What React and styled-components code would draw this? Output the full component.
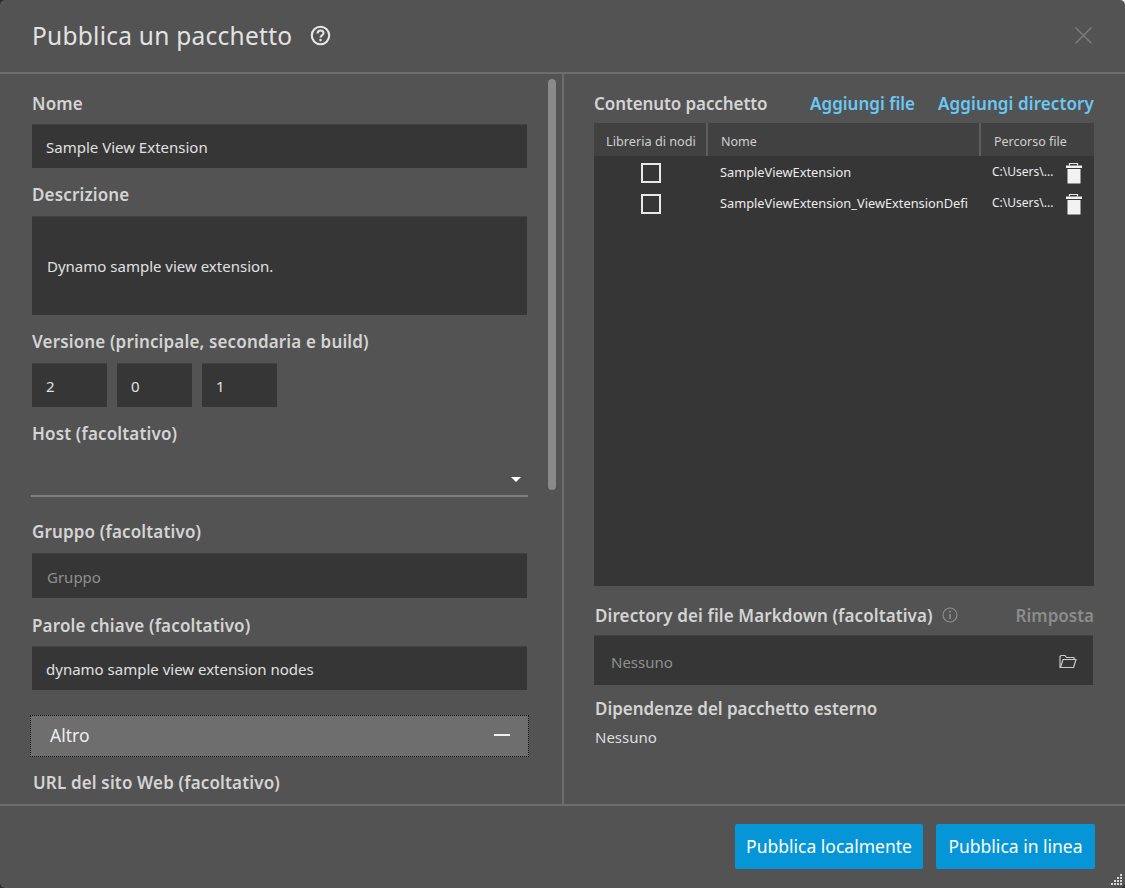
import React from "react";
import styled, { createGlobalStyle } from "styled-components";

const Global = createGlobalStyle`
  html, body {
    margin: 0;
    padding: 0;
    background: linear-gradient(to right, transparent 90%, #e8e8e8 90%) top / 100% 10px no-repeat, #2b2b2b;
  }
  * { box-sizing: border-box; }
  #root { width: 1125px; height: 888px; }
`;

const Dialog = styled.div`
  position: relative;
  width: 1125px;
  height: 888px;
  background: #535353;
  border-radius: 5px;
  overflow: hidden;
  display: flex;
  flex-direction: column;
  font-family: "Noto Sans", sans-serif;
  color: #dcdcdc;
`;
const Header = styled.header`
  height: 74px;
  flex: none;
  border-bottom: 2px solid #6d6d6d;
  display: flex;
  align-items: center;
  padding: 0 32px 2px;
`;
const Title = styled.h1`
  margin: 0;
  font-size: 24.5px;
  font-weight: 400;
  color: #e2e2e2;
  letter-spacing: 0.25px;
`;
const HelpIcon = styled.svg`
  margin-left: 18px;
  width: 21px;
  height: 21px;
`;
const CloseIcon = styled.svg`
  margin-left: auto;
  width: 19px;
  height: 19px;
`;
const Body = styled.div`
  flex: 1;
  min-height: 0;
  display: flex;
`;
const LeftPane = styled.section`
  position: relative;
  width: 564px;
  flex: none;
  border-right: 2px solid #6d6d6d;
  padding: 19px 0 0 32px;
  overflow: hidden;
`;
const Scrollbar = styled.div`
  position: absolute;
  left: 548px;
  top: 5px;
  width: 8px;
  height: 411px;
  border-radius: 4px;
  background: #8a8a8a;
`;
const Label = styled.div`
  font-size: 17px;
  letter-spacing: ${(p) => p.$ls ?? 0.15}px;
  line-height: 22px;
  font-weight: 600;
  color: #d4d4d4;
  margin: ${(p) => p.$mt || 0}px 0 ${(p) => p.$mb ?? 10}px ${(p) => p.$ml || 0}px;
  white-space: nowrap;
`;
const Field = styled.div`
  width: ${(p) => p.$w || 495}px;
  height: ${(p) => p.$h || 44}px;
  background: #363636;
  border-top: 1px solid #414141;
  display: flex;
  align-items: center;
  padding-left: ${(p) => p.$pl || 14}px;
  padding-top: ${(p) => (p.$muted ? 2 : 0)}px;
  font-size: 15px;
  color: ${(p) => (p.$muted ? "#8f8f8f" : "#e0e0e0")};
`;
const VersionRow = styled.div`
  display: flex;
  gap: 10px;
`;
const Select = styled.div`
  position: relative;
  width: 497px;
  height: 44px;
  margin: -2px 0 0 -1px;
  border-bottom: 2px solid #7f7f7f;
`;
const Caret = styled.span`
  position: absolute;
  right: 7px;
  top: 24px;
  width: 0;
  height: 0;
  border-left: 5px solid transparent;
  border-right: 5px solid transparent;
  border-top: 5px solid #fff;
`;
const Expander = styled.div`
  width: 499px;
  height: 42px;
  margin: 25px 0 0 -2px;
  background: #6e6e6e;
  border: 1px dotted #111;
  display: flex;
  align-items: center;
  justify-content: space-between;
  padding: 0 18px 2px 19px;
  font-size: 17.5px;
  color: #ececec;
`;
const Minus = styled.span`
  width: 16px;
  height: 2px;
  background: #f0f0f0;
`;
const RightPane = styled.section`
  flex: 1;
  padding: 19px 31px 0 30px;
  min-width: 0;
`;
const ContentHead = styled.div`
  display: flex;
  align-items: baseline;
  height: 22px;
`;
const Link = styled.span`
  font-size: 17px;
  letter-spacing: ${(p) => p.$ls}px;
  font-weight: 600;
  line-height: 22px;
  color: #6ac8f5;
  white-space: nowrap;
  margin-left: ${(p) => (p.$first ? "auto" : "23px")};
`;
const Table = styled.div`
  margin-top: 8px;
  width: 500px;
  height: 463px;
  background: #363636;
  font-size: 12.8px;
`;
const THead = styled.div`
  display: grid;
  grid-template-columns: 114px 273px 113px;
  height: 33px;
  background: #414141;
`;
const TH = styled.div`
  display: flex;
  align-items: center;
  justify-content: ${(p) => (p.$center ? "center" : "flex-start")};
  padding-left: ${(p) => (p.$center ? 2 : 13)}px;
  padding-top: 3px;
  font-size: ${(p) => (p.$center ? 12.7 : 12.5)}px;
  color: #cfcfcf;
  border-right: ${(p) => (p.$last ? "none" : "2px solid #5e5e5e")};
  white-space: nowrap;
`;
const TRow = styled.div`
  display: grid;
  grid-template-columns: 114px 273px 113px;
  height: 31px;
  align-items: center;
`;
const Check = styled.span`
  display: block;
  justify-self: center;
  width: 20px;
  height: 20px;
  border: 2px solid #e8e8e8;
  margin-top: 2px;
`;
const FileName = styled.div`
  padding-left: 12px;
  width: 260px;
  overflow: hidden;
  white-space: nowrap;
  color: #ececec;
`;
const PathCell = styled.div`
  display: flex;
  align-items: center;
  padding-left: 11px;
  font-size: 12px;
  color: #ececec;
  white-space: nowrap;
`;
const Trash = styled.svg`
  margin: 2px 0 0 13px;
  width: 16px;
  height: 22px;
  flex: none;
`;
const MdHead = styled.div`
  display: flex;
  align-items: center;
  height: 22px;
  margin: 19px 0 0 1px;
  width: 499px;
`;
const InfoIcon = styled.svg`
  margin: 0 0 2px 9px;
  width: 16px;
  height: 16px;
`;
const Reset = styled.span`
  margin: 0 0 2px auto;
  font-size: 17px;
  font-weight: 600;
  color: #8c8c8c;
`;
const PathField = styled.div`
  width: 499px;
  height: 50px;
  margin-top: 8px;
  background: #363636;
  border-top: 1px solid #414141;
  display: flex;
  align-items: center;
  justify-content: space-between;
  padding: 2px 16px 0 17px;
  font-size: 15px;
  color: #8f8f8f;
`;
const Plain = styled.div`
  font-size: 15px;
  color: #dedede;
  line-height: 20px;
  margin-left: 1px;
`;
const Footer = styled.footer`
  flex: none;
  height: 84px;
  border-top: 2px solid #6d6d6d;
  display: flex;
  justify-content: flex-end;
  gap: 13px;
  padding: 18px 30px 0 0;
`;
const Button = styled.button`
  height: 45px;
  width: ${(p) => p.$w}px;
  border: none;
  border-radius: 2px;
  background: #0696d7;
  color: #fff;
  font-family: inherit;
  font-size: 17.5px;
  padding: 0 0 2px;
  white-space: nowrap;
`;
const Grip = styled.svg`
  position: absolute;
  right: 3px;
  bottom: 2px;
  width: 14px;
  height: 14px;
`;

const gripDots = [[12,2],[9,5],[12,5],[6,8],[9,8],[12,8],[3,11],[6,11],[9,11],[12,11]];

function TrashIcon() {
  return (
    <Trash viewBox="0 0 16 22">
      <path d="M3.500 3.500V1.500h8v2" fill="none" stroke="#e4e4e4" strokeWidth="1.200" />
      <path d="M0 3.500h16V6H0z" fill="#f2f2f2" />
      <path d="M1.500 7h13v14.500h-13z" fill="#f2f2f2" />
    </Trash>
  );
}

export default function App() {
  return (
    <>
      <Global />
      <Dialog>
        <Header>
          <Title>Pubblica un pacchetto</Title>
          <HelpIcon viewBox="0 0 20 20" fill="none">
            <circle cx="10" cy="10" r="8.300" stroke="#e6e6e6" strokeWidth="2" />
            <path d="M7.200 8c0-1.700 1.300-2.700 2.900-2.700s2.800 1 2.800 2.400c0 2.200-2.900 2.100-2.900 4.200" stroke="#e6e6e6" strokeWidth="1.900" />
            <circle cx="10" cy="14.400" r="1.200" fill="#e6e6e6" />
          </HelpIcon>
          <CloseIcon viewBox="0 0 19 19" fill="none">
            <path d="M1.500 1.500l16 16M17.500 1.500l-16 16" stroke="#7a7a7a" strokeWidth="1.600" />
          </CloseIcon>
        </Header>
        <Body>
          <LeftPane>
            <Scrollbar />
            <Label $mb={9}>Nome</Label>
            <Field>Sample View Extension</Field>
            <Label $mt={16}>Descrizione</Label>
            <Field $h={99} $pl={15}>Dynamo sample view extension.</Field>
            <Label $mt={16}>Versione (principale, secondaria e build)</Label>
            <VersionRow>
              <Field $w={75}>2</Field>
              <Field $w={75}>0</Field>
              <Field $w={75}>1</Field>
            </VersionRow>
            <Label $mt={16}>Host (facoltativo)</Label>
            <Select><Caret /></Select>
            <Label $mt={24}>Gruppo (facoltativo)</Label>
            <Field $h={45} $pl={15} $muted>Gruppo</Field>
            <Label $mt={17} $mb={9}>Parole chiave (facoltativo)</Label>
            <Field>dynamo sample view extension nodes</Field>
            <Expander>Altro<Minus /></Expander>
            <Label $mt={15} $ml={1}>URL del sito Web (facoltativo)</Label>
          </LeftPane>
          <RightPane>
            <ContentHead>
              <Label $mb={0} $ls={-0.1}>Contenuto pacchetto</Label>
              <Link $first $ls={0}>Aggiungi file</Link>
              <Link $ls={0.1}>Aggiungi directory</Link>
            </ContentHead>
            <Table>
              <THead>
                <TH $center>Libreria di nodi</TH>
                <TH>Nome</TH>
                <TH $last>Percorso file</TH>
              </THead>
              <TRow>
                <Check />
                <FileName>SampleViewExtension</FileName>
                <PathCell>C:\Users\...<TrashIcon /></PathCell>
              </TRow>
              <TRow>
                <Check />
                <FileName>SampleViewExtension_ViewExtensionDefin</FileName>
                <PathCell>C:\Users\...<TrashIcon /></PathCell>
              </TRow>
            </Table>
            <MdHead>
              <Label $mb={0} $ls={0.1}>Directory dei file Markdown (facoltativa)</Label>
              <InfoIcon viewBox="0 0 16 16" fill="none">
                <circle cx="8" cy="8" r="7" stroke="#8c8c8c" strokeWidth="1.200" />
                <path d="M8 7v5" stroke="#8c8c8c" strokeWidth="1.500" />
                <circle cx="8" cy="4.600" r="1" fill="#8c8c8c" />
              </InfoIcon>
              <Reset>Rimposta</Reset>
            </MdHead>
            <PathField>
              Nessuno
              <svg width="18" height="15" viewBox="0 0 18 15" fill="none" stroke="#c8c8c8" strokeWidth="1.200">
                <path d="M2.500 13.500H1V2.500l1-1h4l1.500 2H15v2" />
                <path d="M1.500 13.500l2.500-8h13l-2.500 8z" />
              </svg>
            </PathField>
            <Label $mt={13} $mb={7} $ml={1} $ls={-0.04}>Dipendenze del pacchetto esterno</Label>
            <Plain>Nessuno</Plain>
          </RightPane>
        </Body>
        <Footer>
          <Button $w={188}>Pubblica localmente</Button>
          <Button $w={159}>Pubblica in linea</Button>
        </Footer>
        <Grip viewBox="0 0 14 14">
          {gripDots.map(([x, y]) => (
            <rect key={`${x}-${y}`} x={x} y={y} width="2" height="2" fill="#d8d8d8" />
          ))}
        </Grip>
      </Dialog>
    </>
  );
}
